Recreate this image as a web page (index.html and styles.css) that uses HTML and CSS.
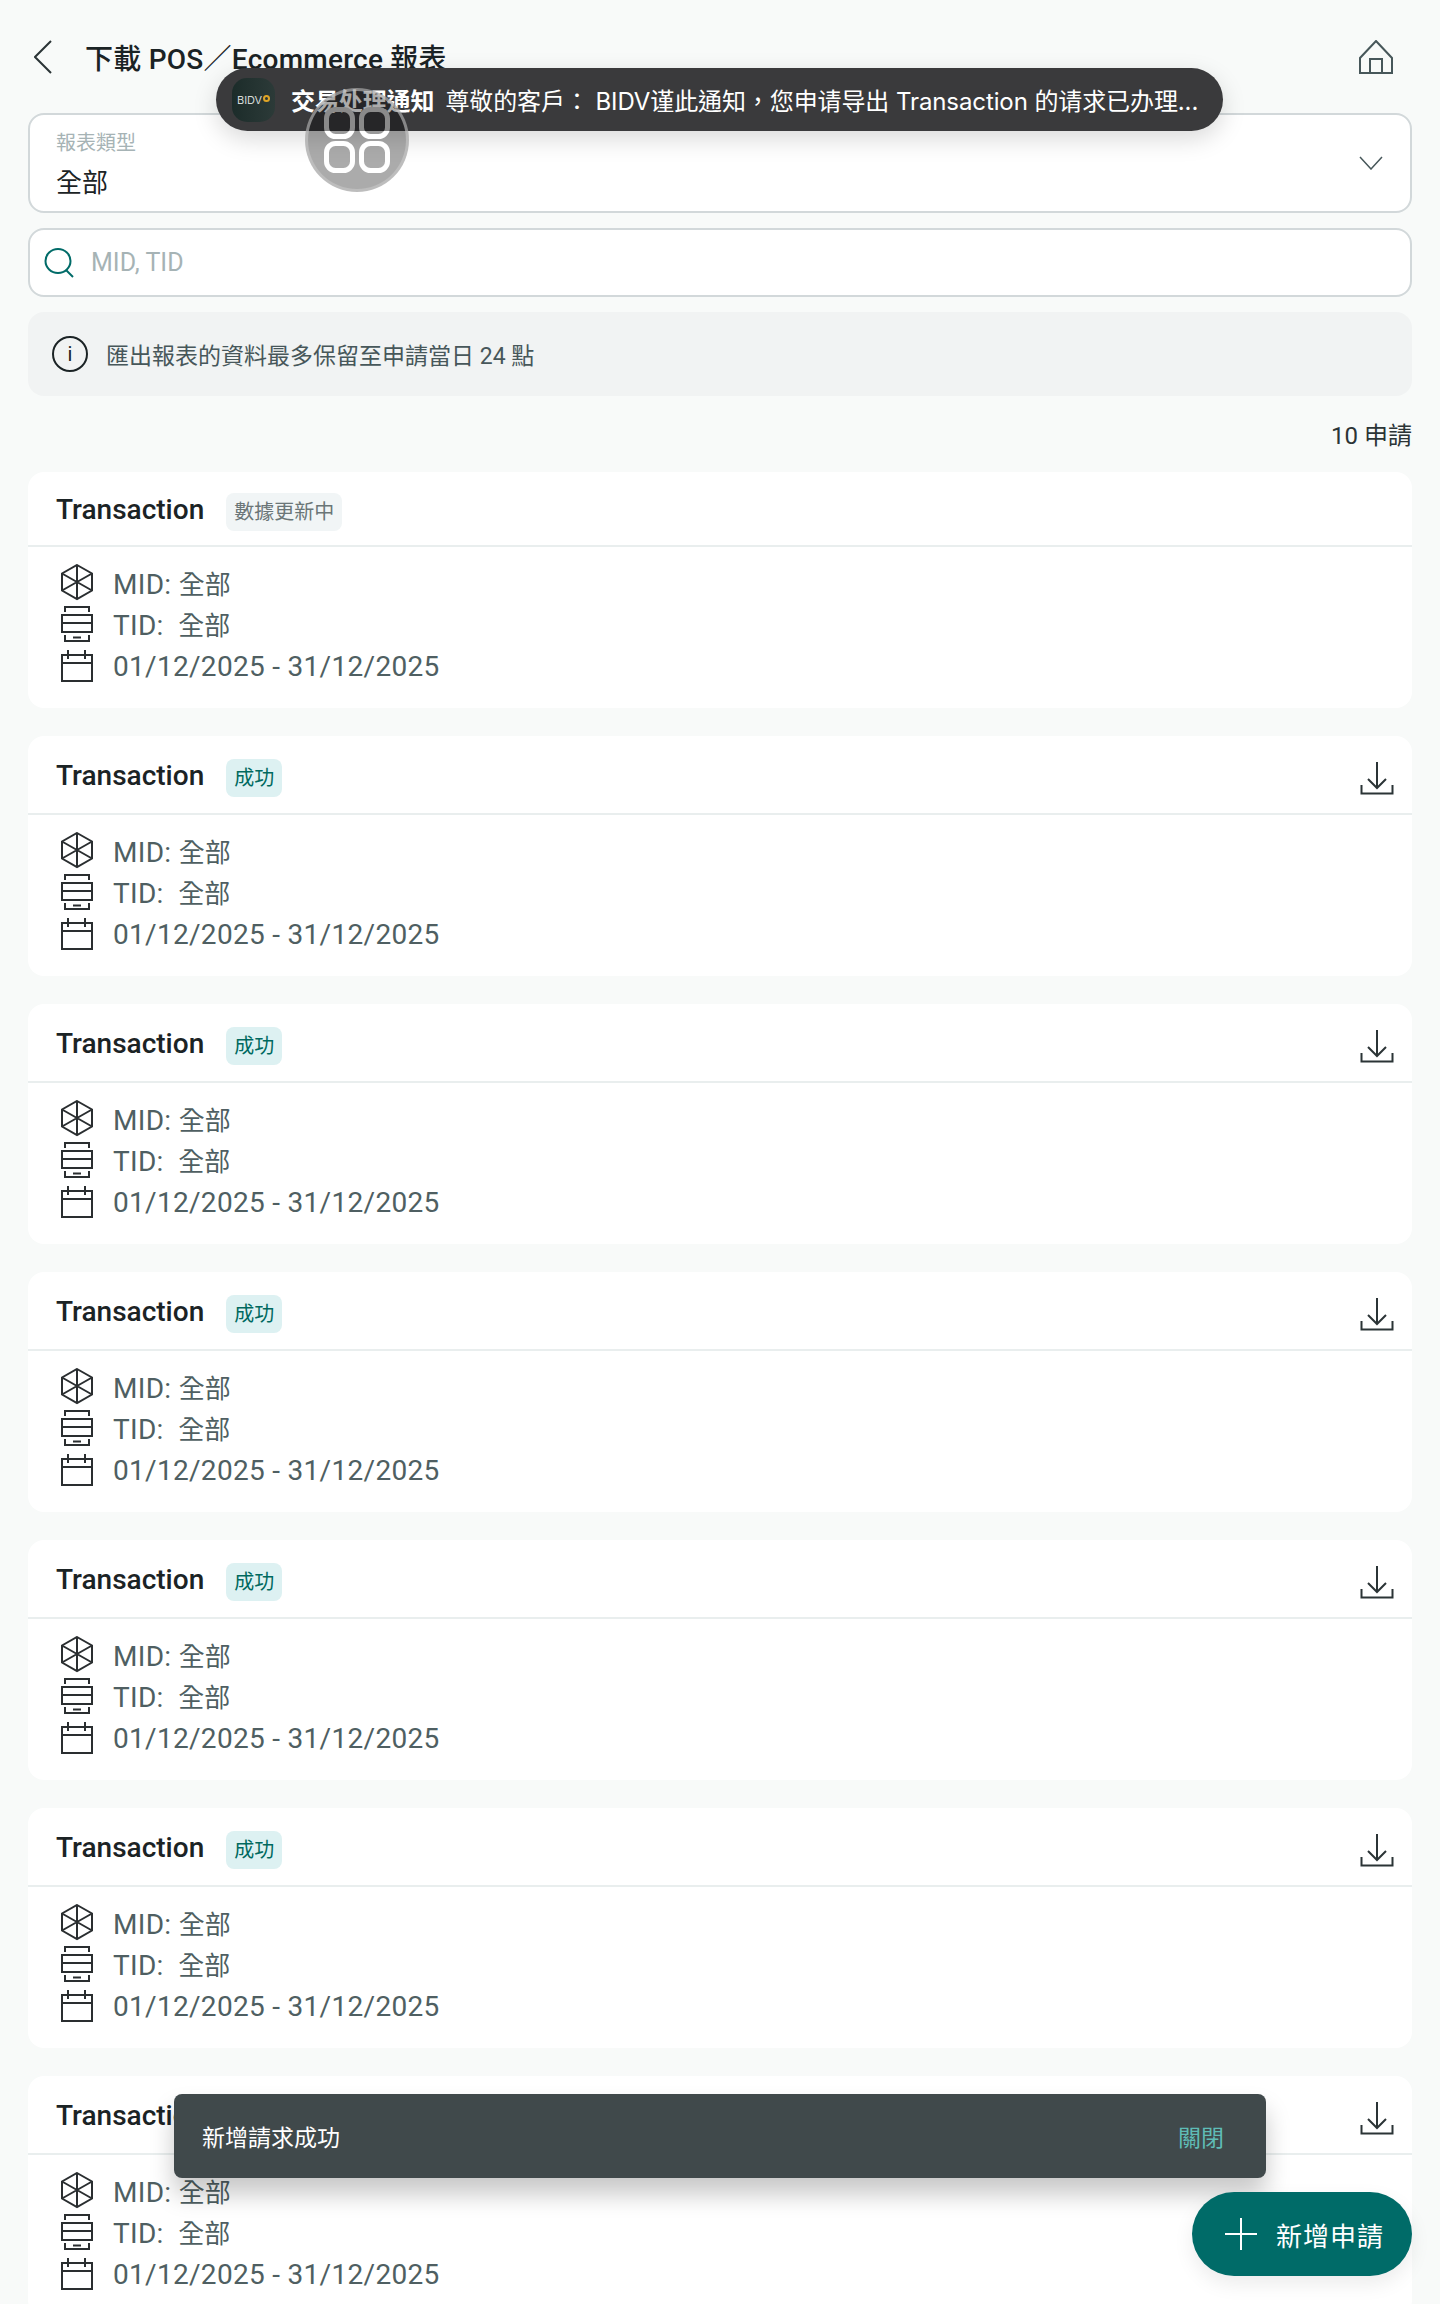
FILE: index.html
```html
<!DOCTYPE html>
<html lang="zh-Hant">

<head>
    <meta charset="UTF-8">
    <meta name="viewport" content="width=device-width, initial-scale=1.0">
    <title>下載 POS／Ecommerce 報表</title>
    <link rel="stylesheet" href="styles.css">
</head>

<body>
    <!-- Shared icons -->
    <svg class="icon-defs" width="0" height="0">
        <symbol id="icon-store" viewBox="0 0 32 40">
            <path d="M16 1 L31 9.5 V26.5 L16 35 L1 26.5 V9.5 Z M16 1 V35 M1 9.5 L31 26.5 M31 9.5 L1 26.5" />
        </symbol>
        <symbol id="icon-terminal" viewBox="0 0 32 40">
            <path d="M4 7 V2 H28 V7 M1 10 H31 V27 H1 Z M1 18 H31 M4 30 V36 H28 V30 M12 32.5 H20" />
        </symbol>
        <symbol id="icon-date" viewBox="0 0 32 40">
            <path d="M1 9 H31 V35 H1 Z M1 17 H31 M7 4 V13 M24 4 V13" />
        </symbol>
        <symbol id="icon-download" viewBox="0 0 48 48">
            <path d="M24 11 V37 M15 28 L24 37 L33 28 M8.5 34 V42.5 H39.5 V34" />
        </symbol>
    </svg>

    <header class="top-bar">
        <svg class="back-icon" width="18" height="34" viewBox="0 0 18 34">
            <path d="M17 1 L1 17 L17 33" />
        </svg>
        <h1 class="page-title">下載 POS／Ecommerce 報表</h1>
        <svg class="home-icon" width="34" height="34" viewBox="0 0 34 34">
            <path d="M17 1 L33 18 V33 H1 V18 Z M11 33 V19 H23 V33" />
        </svg>
    </header>

    <div class="filters">
        <div class="select-box">
            <div>
                <div class="select-label">報表類型</div>
                <div class="select-value">全部</div>
            </div>
            <svg class="chevron-icon" width="24" height="14" viewBox="0 0 24 14">
                <path d="M1 1 L12 13 L23 1" />
            </svg>
        </div>

        <div class="search-box">
            <svg class="search-icon" width="30" height="30" viewBox="0 0 30 30">
                <ellipse cx="14" cy="13" rx="12.5" ry="12" />
                <path d="M22 22 L29 29" />
            </svg>
            <input class="search-input" type="text" placeholder="MID, TID">
        </div>

        <div class="notice">
            <span class="notice-icon">i</span>
            <span>匯出報表的資料最多保留至申請當日 24 點</span>
        </div>
    </div>

    <div class="count">10 申請</div>

    <main class="card-list">
        <section class="card">
            <div class="card-head">
                <div class="card-title">
                    <h2>Transaction</h2>
                    <span class="badge badge-pending">數據更新中</span>
                </div>
            </div>
            <div class="card-body">
                <div class="line"><svg><use href="#icon-store" /></svg><span>MID: <span class="cjk">全部</span></span></div>
                <div class="line"><svg><use href="#icon-terminal" /></svg><span>TID:&nbsp; <span class="cjk">全部</span></span></div>
                <div class="line"><svg><use href="#icon-date" /></svg><span>01/12/2025 - 31/12/2025</span></div>
            </div>
        </section>

        <section class="card">
            <div class="card-head">
                <div class="card-title">
                    <h2>Transaction</h2>
                    <span class="badge badge-success">成功</span>
                </div>
                <svg class="download-icon"><use href="#icon-download" /></svg>
            </div>
            <div class="card-body">
                <div class="line"><svg><use href="#icon-store" /></svg><span>MID: <span class="cjk">全部</span></span></div>
                <div class="line"><svg><use href="#icon-terminal" /></svg><span>TID:&nbsp; <span class="cjk">全部</span></span></div>
                <div class="line"><svg><use href="#icon-date" /></svg><span>01/12/2025 - 31/12/2025</span></div>
            </div>
        </section>

        <section class="card">
            <div class="card-head">
                <div class="card-title">
                    <h2>Transaction</h2>
                    <span class="badge badge-success">成功</span>
                </div>
                <svg class="download-icon"><use href="#icon-download" /></svg>
            </div>
            <div class="card-body">
                <div class="line"><svg><use href="#icon-store" /></svg><span>MID: <span class="cjk">全部</span></span></div>
                <div class="line"><svg><use href="#icon-terminal" /></svg><span>TID:&nbsp; <span class="cjk">全部</span></span></div>
                <div class="line"><svg><use href="#icon-date" /></svg><span>01/12/2025 - 31/12/2025</span></div>
            </div>
        </section>

        <section class="card">
            <div class="card-head">
                <div class="card-title">
                    <h2>Transaction</h2>
                    <span class="badge badge-success">成功</span>
                </div>
                <svg class="download-icon"><use href="#icon-download" /></svg>
            </div>
            <div class="card-body">
                <div class="line"><svg><use href="#icon-store" /></svg><span>MID: <span class="cjk">全部</span></span></div>
                <div class="line"><svg><use href="#icon-terminal" /></svg><span>TID:&nbsp; <span class="cjk">全部</span></span></div>
                <div class="line"><svg><use href="#icon-date" /></svg><span>01/12/2025 - 31/12/2025</span></div>
            </div>
        </section>

        <section class="card">
            <div class="card-head">
                <div class="card-title">
                    <h2>Transaction</h2>
                    <span class="badge badge-success">成功</span>
                </div>
                <svg class="download-icon"><use href="#icon-download" /></svg>
            </div>
            <div class="card-body">
                <div class="line"><svg><use href="#icon-store" /></svg><span>MID: <span class="cjk">全部</span></span></div>
                <div class="line"><svg><use href="#icon-terminal" /></svg><span>TID:&nbsp; <span class="cjk">全部</span></span></div>
                <div class="line"><svg><use href="#icon-date" /></svg><span>01/12/2025 - 31/12/2025</span></div>
            </div>
        </section>

        <section class="card">
            <div class="card-head">
                <div class="card-title">
                    <h2>Transaction</h2>
                    <span class="badge badge-success">成功</span>
                </div>
                <svg class="download-icon"><use href="#icon-download" /></svg>
            </div>
            <div class="card-body">
                <div class="line"><svg><use href="#icon-store" /></svg><span>MID: <span class="cjk">全部</span></span></div>
                <div class="line"><svg><use href="#icon-terminal" /></svg><span>TID:&nbsp; <span class="cjk">全部</span></span></div>
                <div class="line"><svg><use href="#icon-date" /></svg><span>01/12/2025 - 31/12/2025</span></div>
            </div>
        </section>

        <section class="card">
            <div class="card-head">
                <div class="card-title">
                    <h2>Transaction</h2>
                    <span class="badge badge-success">成功</span>
                </div>
                <svg class="download-icon"><use href="#icon-download" /></svg>
            </div>
            <div class="card-body">
                <div class="line"><svg><use href="#icon-store" /></svg><span>MID: <span class="cjk">全部</span></span></div>
                <div class="line"><svg><use href="#icon-terminal" /></svg><span>TID:&nbsp; <span class="cjk">全部</span></span></div>
                <div class="line"><svg><use href="#icon-date" /></svg><span>01/12/2025 - 31/12/2025</span></div>
            </div>
        </section>
    </main>

    <!-- System notification banner -->
    <div class="push-banner">
        <div class="push-logo"><span>BIDV</span><i class="push-logo-dot"></i></div>
        <strong class="push-title">交易处理通知</strong>
        <span class="push-text">尊敬的客户： BIDV谨此通知，您申请导出 Transaction 的请求已办理...</span>
    </div>

    <!-- Floating assistive button -->
    <div class="assist-button">
        <svg width="66" height="66" viewBox="0 0 66 66">
            <defs>
                <linearGradient id="assist-fade" gradientUnits="userSpaceOnUse" x1="0" y1="0" x2="0" y2="66">
                    <stop offset="0.36" stop-color="#8a8a8a" />
                    <stop offset="0.36" stop-color="#ffffff" />
                </linearGradient>
            </defs>
            <rect x="2.5" y="2.5" width="26" height="27" rx="9" />
            <rect x="37.5" y="2.5" width="26" height="27" rx="9" />
            <rect x="2.5" y="36.5" width="26" height="27" rx="9" />
            <rect x="37.5" y="36.5" width="26" height="27" rx="9" />
        </svg>
    </div>

    <div class="snackbar">
        <span>新增請求成功</span>
        <span class="snackbar-action">關閉</span>
    </div>

    <button class="fab">
        <svg width="32" height="32" viewBox="0 0 32 32">
            <path d="M16 0 V32 M0 16 H32" />
        </svg>
        <span>新增申請</span>
    </button>
</body>

</html>
```

FILE: styles.css
```css
/* Page */
html,
body {
    height: 2304px;
    overflow: hidden;
}

body {
    position: relative;
    margin: 0;
    padding: 0 28px;
    background-color: #f8faf9;
    color: #1b2325;
    font-family: Roboto, "Noto Sans CJK TC", sans-serif;
    font-size: 26px;
}

.icon-defs {
    position: absolute;
}

/* Top bar */
.top-bar {
    display: flex;
    align-items: center;
    height: 113px;
    padding: 0 19px 0 6px;
    box-sizing: border-box;
}

.back-icon {
    margin-right: 33px;
    fill: none;
    stroke: #2b3436;
    stroke-width: 2;
}

.page-title {
    flex: 1;
    margin: 0;
    font-size: 28px;
    font-weight: 500;
    letter-spacing: 0.25px;
}

.home-icon {
    fill: none;
    stroke: #47575a;
    stroke-width: 2;
}

/* Filters */
.filters {
    display: flex;
    flex-direction: column;
    gap: 15px;
}

.select-box {
    display: flex;
    justify-content: space-between;
    align-items: center;
    height: 100px;
    padding: 0 27px 0 26px;
    box-sizing: border-box;
    background-color: #ffffff;
    border: 2px solid #d2d8da;
    border-radius: 16px;
}

.select-label {
    margin-top: 4px;
    color: #a6b3b5;
    font-size: 20px;
    line-height: 30px;
}

.select-value {
    margin-top: 6px;
    font-size: 26px;
    line-height: 38px;
}

.chevron-icon {
    fill: none;
    stroke: #47575a;
    stroke-width: 1.5;
}

.search-box {
    display: flex;
    align-items: center;
    gap: 17px;
    height: 69px;
    padding: 0 14px;
    box-sizing: border-box;
    background-color: #ffffff;
    border: 2px solid #d2d8da;
    border-radius: 16px;
}

.search-icon {
    flex: none;
    fill: none;
    stroke: #006b68;
    stroke-width: 2;
}

.search-input {
    flex: 1;
    padding: 0;
    border: 0;
    outline: 0;
    background: transparent;
    font-family: inherit;
    font-size: 25px;
}

.search-input::placeholder {
    color: #a6b3b5;
    opacity: 1;
}

.notice {
    display: flex;
    align-items: center;
    gap: 18px;
    height: 84px;
    padding: 0 24px;
    box-sizing: border-box;
    background-color: #f1f3f3;
    border-radius: 16px;
    color: #47575a;
    font-size: 23px;
}

.notice-icon {
    display: flex;
    justify-content: center;
    align-items: center;
    width: 32px;
    height: 32px;
    border: 2px solid #1b2325;
    border-radius: 50%;
    color: #1b2325;
    font-size: 20px;
}

.count {
    margin: 26px 0 21px;
    color: #2b3436;
    font-size: 24px;
    line-height: 29px;
    text-align: right;
}

/* Report cards */
.card-list {
    display: flex;
    flex-direction: column;
    gap: 28px;
}

.card {
    background-color: #ffffff;
    border-radius: 16px;
}

.card-head {
    display: flex;
    justify-content: space-between;
    align-items: center;
    padding: 15px 11px 14px 28px;
    border-bottom: 2px solid #e9eeee;
}

.card-title {
    display: flex;
    align-items: center;
    gap: 22px;
}

.card-title h2 {
    margin: 0;
    font-size: 28px;
    font-weight: 500;
}

.badge {
    margin-top: 6px;
    padding: 0 8px;
    border-radius: 8px;
    font-size: 20px;
    line-height: 38px;
}

.badge-pending {
    background-color: #f1f5f6;
    color: #6b7678;
}

.badge-success {
    background-color: #ddf1f2;
    color: #00695f;
}

.download-icon {
    width: 48px;
    height: 48px;
    fill: none;
    stroke: #2b3436;
    stroke-width: 2;
}

.card-body {
    padding: 17px 33px 21px;
}

.line {
    display: flex;
    gap: 20px;
    height: 41px;
    color: #4f5f62;
    font-size: 28px;
    letter-spacing: 0.3px;
    line-height: 41px;
}

.line svg {
    flex: none;
    width: 32px;
    height: 40px;
    fill: none;
    stroke: #2a2e30;
    stroke-width: 2;
}

.cjk {
    font-size: 26px;
    letter-spacing: 0;
}

/* Overlays */
.push-banner {
    position: absolute;
    top: 68px;
    left: 216px;
    display: flex;
    align-items: center;
    width: 1007px;
    height: 63px;
    padding-left: 16px;
    box-sizing: border-box;
    background-color: #3a3a3c;
    border-radius: 32px;
    box-shadow: 0 8px 24px rgba(0, 0, 0, 0.15);
    color: #ffffff;
    font-family: Inter, "Noto Sans CJK SC", sans-serif;
    font-size: 24px;
    letter-spacing: -0.1px;
    white-space: nowrap;
}

.push-logo {
    display: flex;
    justify-content: center;
    align-items: center;
    gap: 1px;
    width: 43px;
    height: 44px;
    margin-right: 16px;
    background: linear-gradient(90deg, #1c2c2a, #2c3a38);
    border-radius: 15px;
    color: #d5dad8;
    font-size: 11px;
}

.push-logo-dot {
    width: 7px;
    height: 7px;
    margin-bottom: 3px;
    box-sizing: border-box;
    border: 2px solid #e0a526;
    border-radius: 50%;
}

.push-title {
    margin-right: 11px;
    font-weight: 700;
}

.assist-button {
    position: absolute;
    top: 88px;
    left: 305px;
    display: flex;
    justify-content: center;
    align-items: center;
    width: 104px;
    height: 104px;
    box-sizing: border-box;
    background-color: rgba(0, 0, 0, 0.33);
    border: 3px solid rgba(200, 200, 200, 0.6);
    border-radius: 50%;
}

.assist-button svg {
    fill: none;
    stroke: url(#assist-fade);
    stroke-width: 5;
}

.snackbar {
    position: absolute;
    top: 2094px;
    left: 174px;
    display: flex;
    justify-content: space-between;
    align-items: center;
    width: 1092px;
    height: 84px;
    padding: 0 42px 0 28px;
    box-sizing: border-box;
    background-color: #40494b;
    border-radius: 8px;
    box-shadow: 0 16px 24px rgba(0, 0, 0, 0.22);
    color: #ffffff;
    font-size: 23px;
}

.snackbar-action {
    color: #5fbcb6;
}

.fab {
    position: absolute;
    top: 2192px;
    left: 1192px;
    display: flex;
    align-items: center;
    gap: 19px;
    width: 220px;
    height: 84px;
    padding: 0 0 0 33px;
    box-sizing: border-box;
    background-color: #006b68;
    border: 0;
    border-radius: 42px;
    box-shadow: 0 8px 20px rgba(0, 0, 0, 0.08);
    color: #ffffff;
    font-family: inherit;
    font-size: 26px;
    letter-spacing: 1px;
    white-space: nowrap;
}

.fab svg {
    fill: none;
    stroke: #ffffff;
    stroke-width: 2;
}
```
